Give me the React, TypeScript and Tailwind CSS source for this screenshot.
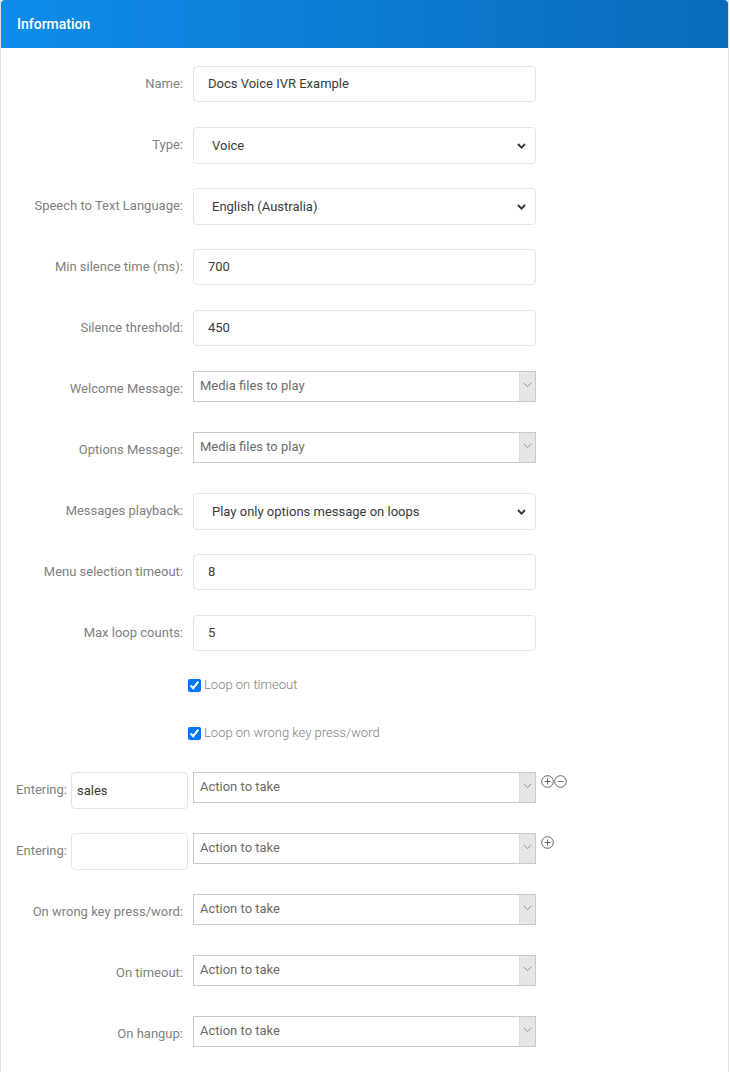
import React from "react";

const font = { fontFamily: "Roboto, 'Noto Sans', Arial, sans-serif" };

function Chevron() {
  return (
    <svg width="9" height="6" viewBox="0 0 9 6" className="absolute right-[9px] top-[15px]">
      <path d="M1 1 L4.5 4.6 L8 1" fill="none" stroke="#333" strokeWidth="1.8" />
    </svg>
  );
}

function TextInput({ value }: { value: string }) {
  return (
    <div className="w-[343px] h-[36px] rounded-[4px] border border-[#e4e4e4] bg-white pl-[14px] flex items-center text-[13px] text-[#3a3a3a]">
      {value}
    </div>
  );
}

function NativeSelect({ value }: { value: string }) {
  return (
    <div className="relative w-[343px] h-[37px] rounded-[4px] border border-[#e4e4e4] bg-white pl-[18px] flex items-center text-[13px] text-[#3a3a3a]">
      {value}
      <Chevron />
    </div>
  );
}

function Select2({ value }: { value: string }) {
  return (
    <div className="w-[343px] h-[31px] border border-[#c9c9c9] bg-white flex text-[13px] text-[#6b6b6b]">
      <div className="flex-1 pl-[6px] flex items-center pb-[1px]">{value}</div>
      <div className="w-[16px] h-full bg-[#e6e6e6] border-l border-[#dcdcdc] flex justify-center pt-[10px]">
        <svg width="9" height="6" viewBox="0 0 9 6">
          <path d="M0.8 0.8 L4.5 4.6 L8.2 0.8" fill="none" stroke="#8a8a8a" strokeWidth="0.9" />
        </svg>
      </div>
    </div>
  );
}

function Row({ label, children }: { label: string; children: React.ReactNode }) {
  return (
    <div className="flex items-start h-[61px]">
      <div className="w-[182px] text-right text-[13px] text-[#808080] leading-[16px] pt-[10px]">{label}</div>
      <div className="ml-[10px]">{children}</div>
    </div>
  );
}

function CircleIcon({ minus }: { minus?: boolean }) {
  return (
    <svg width="13" height="13" viewBox="0 0 13 13">
      <circle cx="6.5" cy="6.5" r="5.8" fill="none" stroke="#555" strokeWidth="0.9" />
      <path d="M3.6 6.5 H9.4" stroke="#555" strokeWidth="0.9" />
      {!minus && <path d="M6.5 3.6 V9.4" stroke="#555" strokeWidth="0.9" />}
    </svg>
  );
}

function EnteringRow({ value, minus }: { value: string; minus?: boolean }) {
  return (
    <div className="flex items-start h-[61px]">
      <div className="w-[187px] flex justify-end items-start">
        <div className="text-[13px] text-[#808080] leading-[16px] pt-[10px] mr-[4px]">Entering:</div>
        <div className="w-[117px] h-[37px] rounded-[4px] border border-[#e4e4e4] bg-white pl-[5px] flex items-center text-[13px] text-[#3a3a3a]">
          {value}
        </div>
      </div>
      <div className="ml-[5px]">
        <Select2 value="Action to take" />
      </div>
      <div className="ml-[5px] mt-[3px] flex">
        <CircleIcon />
        {minus && <CircleIcon minus />}
      </div>
    </div>
  );
}

function Check({ label }: { label: string }) {
  return (
    <div className="flex items-center h-[18px] pl-[187px]">
      <input type="checkbox" checked readOnly className="w-[13px] h-[13px] m-0" />
      <span className="ml-[3px] text-[13px] text-[#808080] font-light leading-[16px]">{label}</span>
    </div>
  );
}

export default function App() {
  return (
    <div style={font} className="w-[730px] min-h-[1072px] bg-white">
      <div className="w-[729px] min-h-[1072px] border-x border-[#e2e2e2]">
        <div className="h-[48px] rounded-t-[4px] bg-gradient-to-r from-[#0e8cea] to-[#0a6bbb] flex items-center pl-[16px] pt-[1px]">
          <span className="text-white text-[14px] font-medium">Information</span>
        </div>
        <div className="pt-[18px]">
          <Row label="Name:"><TextInput value="Docs Voice IVR Example" /></Row>
          <Row label="Type:"><NativeSelect value="Voice" /></Row>
          <Row label="Speech to Text Language:"><NativeSelect value="English (Australia)" /></Row>
          <Row label="Min silence time (ms):"><TextInput value="700" /></Row>
          <Row label="Silence threshold:"><TextInput value="450" /></Row>
          <Row label="Welcome Message:"><Select2 value="Media files to play" /></Row>
          <Row label="Options Message:"><Select2 value="Media files to play" /></Row>
          <Row label="Messages playback:"><NativeSelect value="Play only options message on loops" /></Row>
          <Row label="Menu selection timeout:"><TextInput value="8" /></Row>
          <Row label="Max loop counts:"><TextInput value="5" /></Row>
          <Check label="Loop on timeout" />
          <div className="mt-[30px]">
            <Check label="Loop on wrong key press/word" />
          </div>
          <div className="mt-[30px]">
            <EnteringRow value="sales" minus />
            <EnteringRow value="" />
          </div>
          <Row label="On wrong key press/word:"><Select2 value="Action to take" /></Row>
          <Row label="On timeout:"><Select2 value="Action to take" /></Row>
          <Row label="On hangup:"><Select2 value="Action to take" /></Row>
        </div>
      </div>
    </div>
  );
}
